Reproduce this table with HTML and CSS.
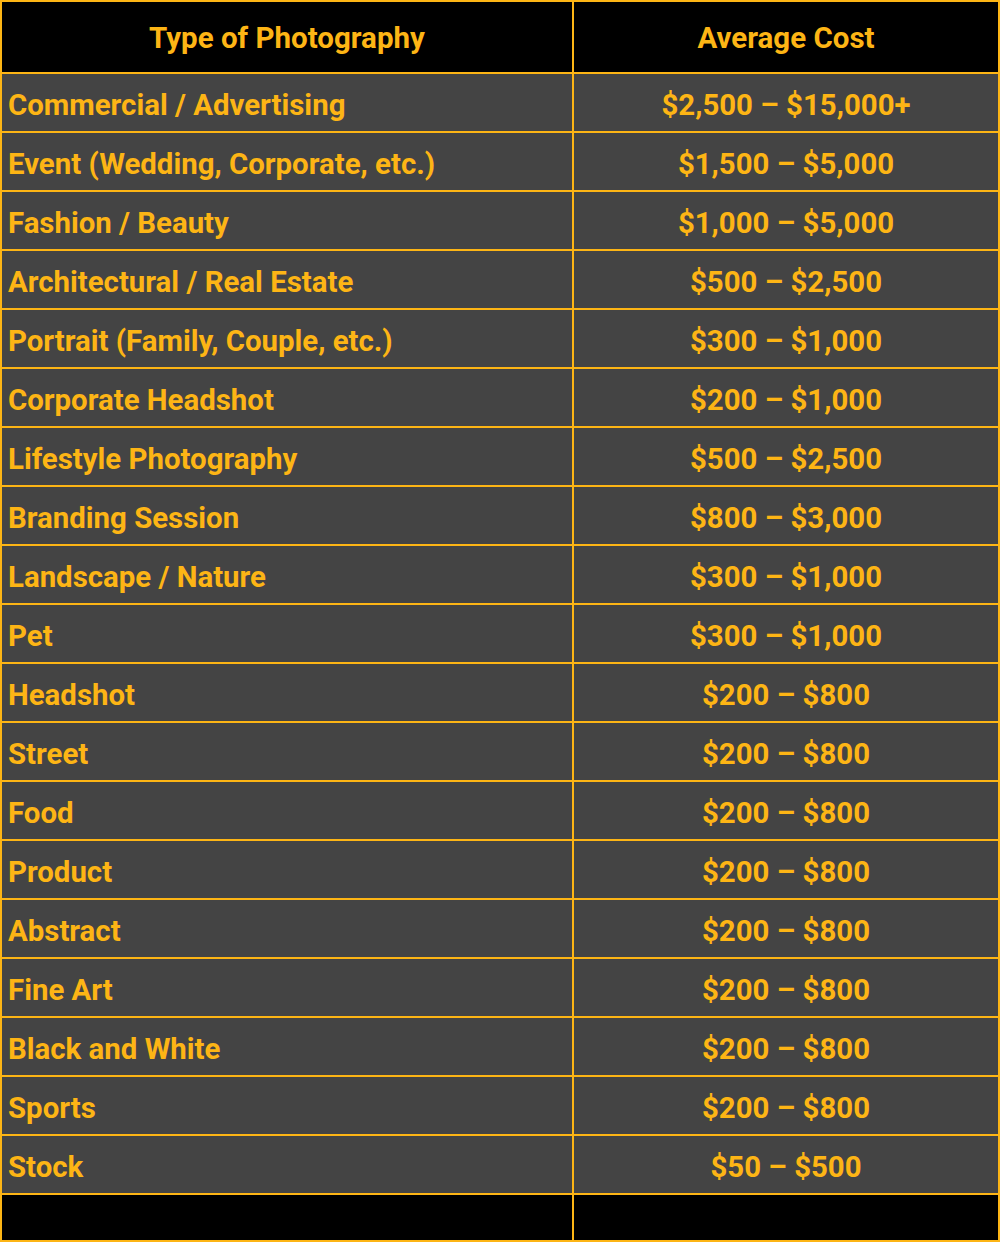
FILE: index.html
```html
<!DOCTYPE html>
<html>
<head>
<meta charset="utf-8">
<link rel="stylesheet" href="styles.css">
</head>
<body>
<div class="table">
  <div class="cell head">Type of Photography</div>
  <div class="cell head center">Average Cost</div>
  <div class="cell">Commercial / Advertising</div><div class="cell center">$2,500 – $15,000+</div>
  <div class="cell">Event (Wedding, Corporate, etc.)</div><div class="cell center">$1,500 – $5,000</div>
  <div class="cell">Fashion / Beauty</div><div class="cell center">$1,000 – $5,000</div>
  <div class="cell">Architectural / Real Estate</div><div class="cell center">$500 – $2,500</div>
  <div class="cell">Portrait (Family, Couple, etc.)</div><div class="cell center">$300 – $1,000</div>
  <div class="cell">Corporate Headshot</div><div class="cell center">$200 – $1,000</div>
  <div class="cell">Lifestyle Photography</div><div class="cell center">$500 – $2,500</div>
  <div class="cell">Branding Session</div><div class="cell center">$800 – $3,000</div>
  <div class="cell">Landscape / Nature</div><div class="cell center">$300 – $1,000</div>
  <div class="cell">Pet</div><div class="cell center">$300 – $1,000</div>
  <div class="cell">Headshot</div><div class="cell center">$200 – $800</div>
  <div class="cell">Street</div><div class="cell center">$200 – $800</div>
  <div class="cell">Food</div><div class="cell center">$200 – $800</div>
  <div class="cell">Product</div><div class="cell center">$200 – $800</div>
  <div class="cell">Abstract</div><div class="cell center">$200 – $800</div>
  <div class="cell">Fine Art</div><div class="cell center">$200 – $800</div>
  <div class="cell">Black and White</div><div class="cell center">$200 – $800</div>
  <div class="cell">Sports</div><div class="cell center">$200 – $800</div>
  <div class="cell">Stock</div><div class="cell center">$50 – $500</div>
  <div class="cell foot"></div><div class="cell foot"></div>
</div>
</body>
</html>
```
FILE: styles.css
```css
html, body {
  margin: 0;
  padding: 0;
  background: #000;
}
.table {
  width: 1000px;
  height: 1242px;
  box-sizing: border-box;
  display: grid;
  grid-template-columns: 570px 424px;
  grid-template-rows: 70px repeat(19, 57px) 45px;
  gap: 2px;
  padding: 2px;
  background: #FDB515;
  font-family: Roboto, "Liberation Sans", sans-serif;
  font-weight: 700;
  color: #FDB515;
}
.cell {
  background: #444444;
  display: flex;
  align-items: center;
  padding-left: 6px;
  padding-top: 4px;
  font-size: 29.4px;
  white-space: nowrap;
}
.center {
  justify-content: center;
  padding-left: 0;
}
.head {
  background: #000;
  justify-content: center;
  padding-left: 0;
  padding-top: 2px;
  font-size: 29.5px;
}
.foot {
  background: #000;
  padding-top: 0;
}
```
